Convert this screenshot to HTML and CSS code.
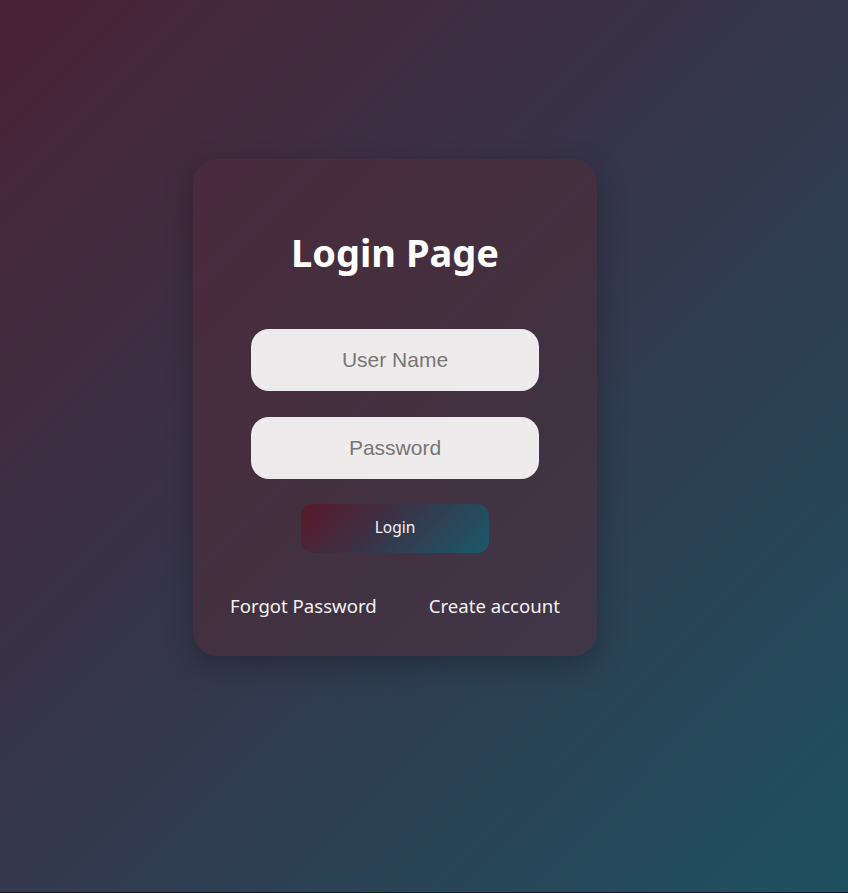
FILE: index.html
```html
<!DOCTYPE html>
<html lang="en">
<head>
<meta charset="utf-8">
<title>Login Page</title>
<link rel="stylesheet" href="styles.css">
</head>
<body>
<main class="page">
  <form class="card">
    <h1 class="title">Login Page</h1>
    <input class="field" type="text" placeholder="User Name">
    <input class="field" type="password" placeholder="Password">
    <button class="btn" type="button">Login</button>
    <div class="links">
      <a class="link" href="#">Forgot Password</a>
      <a class="link" href="#">Create account</a>
    </div>
  </form>
</main>
</body>
</html>
```
FILE: styles.css
```css
html {
  background: #1f1f22;
  margin: 0;
  padding: 0;
}
body {
  margin: 0;
  padding: 0;
  font-family: "Noto Sans", "Open Sans", sans-serif;
}
.page {
  height: 892px;
  box-sizing: border-box;
  padding: 159px 0 0 193px;
  background: linear-gradient(135deg, #4b2236 0%, #36354a 45%, #1e5161 100%);
}
.card {
  width: 404px;
  height: 497px;
  box-sizing: border-box;
  padding: 70px 0 0;
  border-radius: 25px;
  background: linear-gradient(135deg, #4b2a3e 0%, #43303f 50%, #3f3749 100%);
  box-shadow: 0 10px 30px rgba(0, 0, 0, 0.25);
  display: flex;
  flex-direction: column;
  align-items: center;
}
.title {
  margin: 0 0 52px;
  height: 48px;
  line-height: 47px;
  font-size: 38px;
  font-weight: 700;
  color: #ffffff;
}
.field {
  width: 288px;
  height: 62px;
  box-sizing: border-box;
  border: none;
  border-radius: 18px;
  background: #eeebec;
  font-family: "Liberation Sans", Arial, sans-serif;
  font-size: 21px;
  text-align: center;
  color: #333;
  outline: none;
  margin: 0 0 26px;
}
.field:nth-of-type(2) {
  margin-bottom: 25px;
}
.field::placeholder {
  color: #767676;
}
.btn {
  width: 188px;
  height: 49px;
  padding: 0 0 3px;
  border: none;
  border-radius: 12px;
  background: linear-gradient(135deg, #5a1828 0%, #3a3348 45%, #1a5a6a 100%);
  color: #f4f4f4;
  font-family: "Noto Sans", sans-serif;
  font-size: 15.5px;
  cursor: pointer;
}
.links {
  margin-top: 40px;
  display: flex;
  gap: 52px;
}
.link {
  color: #f2f2f2;
  text-decoration: none;
  font-size: 18.6px;
  line-height: 26px;
}
```
